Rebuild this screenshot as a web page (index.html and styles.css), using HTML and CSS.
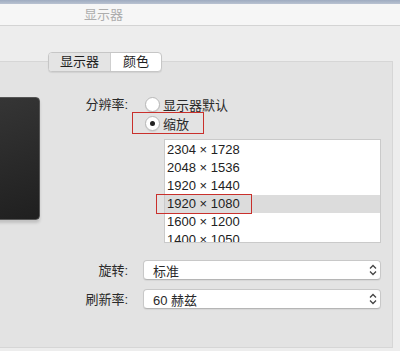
FILE: index.html
```html
<!DOCTYPE html>
<html lang="zh-CN">
<head>
    <meta charset="UTF-8">
    <meta name="viewport" content="width=device-width, initial-scale=1.0">
    <title>显示器</title>
    <link rel="stylesheet" href="styles.css">
</head>
<body>
    <div class="top-strip"></div>
    <div class="titlebar">显示器</div>
    <div class="main">
        <div class="tabs">
            <span class="tab active">显示器</span>
            <span class="tab">颜色</span>
        </div>
        <div class="panel">
            <div class="form">
                <div class="side">
                    <div class="screen"></div>
                    <span class="label">分辨率:</span>
                </div>
                <div class="resolution">
                    <div class="radio-row">
                        <span class="radio"></span>
                        <span>显示器默认</span>
                    </div>
                    <div class="radio-row marked">
                        <span class="radio checked"></span>
                        <span>缩放</span>
                    </div>
                    <div class="list-wrap">
                        <ul class="list">
                            <li>2304 × 1728</li>
                            <li>2048 × 1536</li>
                            <li>1920 × 1440</li>
                            <li class="selected">1920 × 1080</li>
                            <li>1600 × 1200</li>
                            <li>1400 × 1050</li>
                        </ul>
                        <div class="mark-row"></div>
                    </div>
                </div>

                <span class="label row-label first">旋转:</span>
                <div class="popup first">
                    <span>标准</span>
                    <svg class="chevron" width="8" height="12" viewBox="0 0 8 12">
                        <path d="M1 4.5 L4 1.5 L7 4.5 M1 7.5 L4 10.5 L7 7.5" fill="none" stroke="#444" stroke-width="1.3"/>
                    </svg>
                </div>

                <span class="label row-label">刷新率:</span>
                <div class="popup">
                    <span>60 赫兹</span>
                    <svg class="chevron" width="8" height="12" viewBox="0 0 8 12">
                        <path d="M1 4.5 L4 1.5 L7 4.5 M1 7.5 L4 10.5 L7 7.5" fill="none" stroke="#444" stroke-width="1.3"/>
                    </svg>
                </div>
            </div>
        </div>
    </div>
</body>
</html>
```

FILE: styles.css
```css
body {
    margin: 0;
    width: 400px;
    height: 351px;
    overflow: hidden;
    background-color: #ededed;
    font-family: "Liberation Sans", "Noto Sans CJK SC", sans-serif;
    font-size: 13px;
    color: #2a2a2a;
}
.top-strip {
    height: 4px;
    background: linear-gradient(#9eabc0, #b9c2d1);
}
.titlebar {
    height: 21px;
    line-height: 21px;
    padding-left: 84px;
    background-color: #f6f6f6;
    border-bottom: 1px solid #d4d4d4;
    color: #adadad;
}
.main {
    padding-top: 26px;
}
.tabs {
    position: relative;
    z-index: 1;
    display: flex;
    width: fit-content;
    margin-left: 48px;
    margin-bottom: -11px;
    border: 1px solid #c6c6c6;
    border-radius: 4px;
    overflow: hidden;
    background: white;
    box-shadow: 0 1px 1px rgba(0, 0, 0, 0.08);
}
.tab {
    padding: 0 12px;
    height: 18px;
    line-height: 18px;
    color: #1f1f1f;
}
.tab.active {
    background-color: #e4e4e4;
    border-right: 1px solid #cfcfcf;
    padding: 0 11px;
}
.panel {
    height: 285px;
    margin-right: 7px;
    background-color: #e3e3e3;
    border: 1px solid #d6d6d6;
    border-left: none;
}
.form {
    display: grid;
    grid-template-columns: 133px 1fr;
    column-gap: 10px;
    padding-top: 33px;
    padding-right: 11px;
}
.side {
    display: flex;
    align-items: flex-start;
}
.screen {
    width: 120px;
    height: 123px;
    margin-left: -80px;
    margin-top: 2px;
    border-radius: 4px;
    background: linear-gradient(160deg, #3a3a3a, #1f1f1f);
    border: 1px solid #555;
    box-sizing: border-box;
    box-shadow: 0 3px 3px rgba(0, 0, 0, 0.15);
}
.label {
    line-height: 19px;
    text-align: right;
    padding-right: 5px;
    color: #2a2a2a;
}
.side .label {
    margin-left: auto;
}
.row-label {
    align-self: center;
}
.row-label.first,
.popup.first {
    margin-top: 17px;
}
.row-label:not(.first),
.popup:not(.first) {
    margin-top: 9px;
}
.radio-row {
    position: relative;
    display: flex;
    align-items: center;
    gap: 3px;
    height: 19px;
    margin-left: 2px;
}
.radio {
    width: 15px;
    height: 15px;
    border-radius: 50%;
    background: white;
    border: 1px solid #b8b8b8;
    box-sizing: border-box;
    box-shadow: 0 1px 1px rgba(0, 0, 0, 0.08);
    display: flex;
    align-items: center;
    justify-content: center;
}
.radio.checked::after {
    content: "";
    width: 5px;
    height: 5px;
    border-radius: 50%;
    background: #222;
}
.marked::after {
    content: "";
    position: absolute;
    left: -13px;
    top: -2px;
    width: 72px;
    height: 22px;
    border: 1.5px solid #c9302c;
    box-sizing: border-box;
}
.list-wrap {
    position: relative;
    margin-top: 6px;
    margin-left: 21px;
}
.list {
    list-style: none;
    margin: 0;
    padding: 1px 0 0;
    height: 101px;
    overflow: hidden;
    background: white;
    border: 1px solid #cacaca;
}
.list li {
    height: 18px;
    line-height: 18px;
    padding-left: 2px;
    color: #222;
}
.list li.selected {
    background-color: #dcdcdc;
}
.mark-row {
    position: absolute;
    left: -8px;
    top: 55px;
    width: 96px;
    height: 20px;
    border: 1.5px solid #c9302c;
    box-sizing: border-box;
}
.popup {
    display: flex;
    align-items: center;
    justify-content: space-between;
    height: 20px;
    padding: 0 3px 0 9px;
    background: white;
    border: 1px solid #c8c8c8;
    border-bottom-color: #b5b5b5;
    border-radius: 4px;
    box-sizing: border-box;
    box-shadow: 0 1px 1px rgba(0, 0, 0, 0.06);
}
.chevron {
    display: block;
}
```
